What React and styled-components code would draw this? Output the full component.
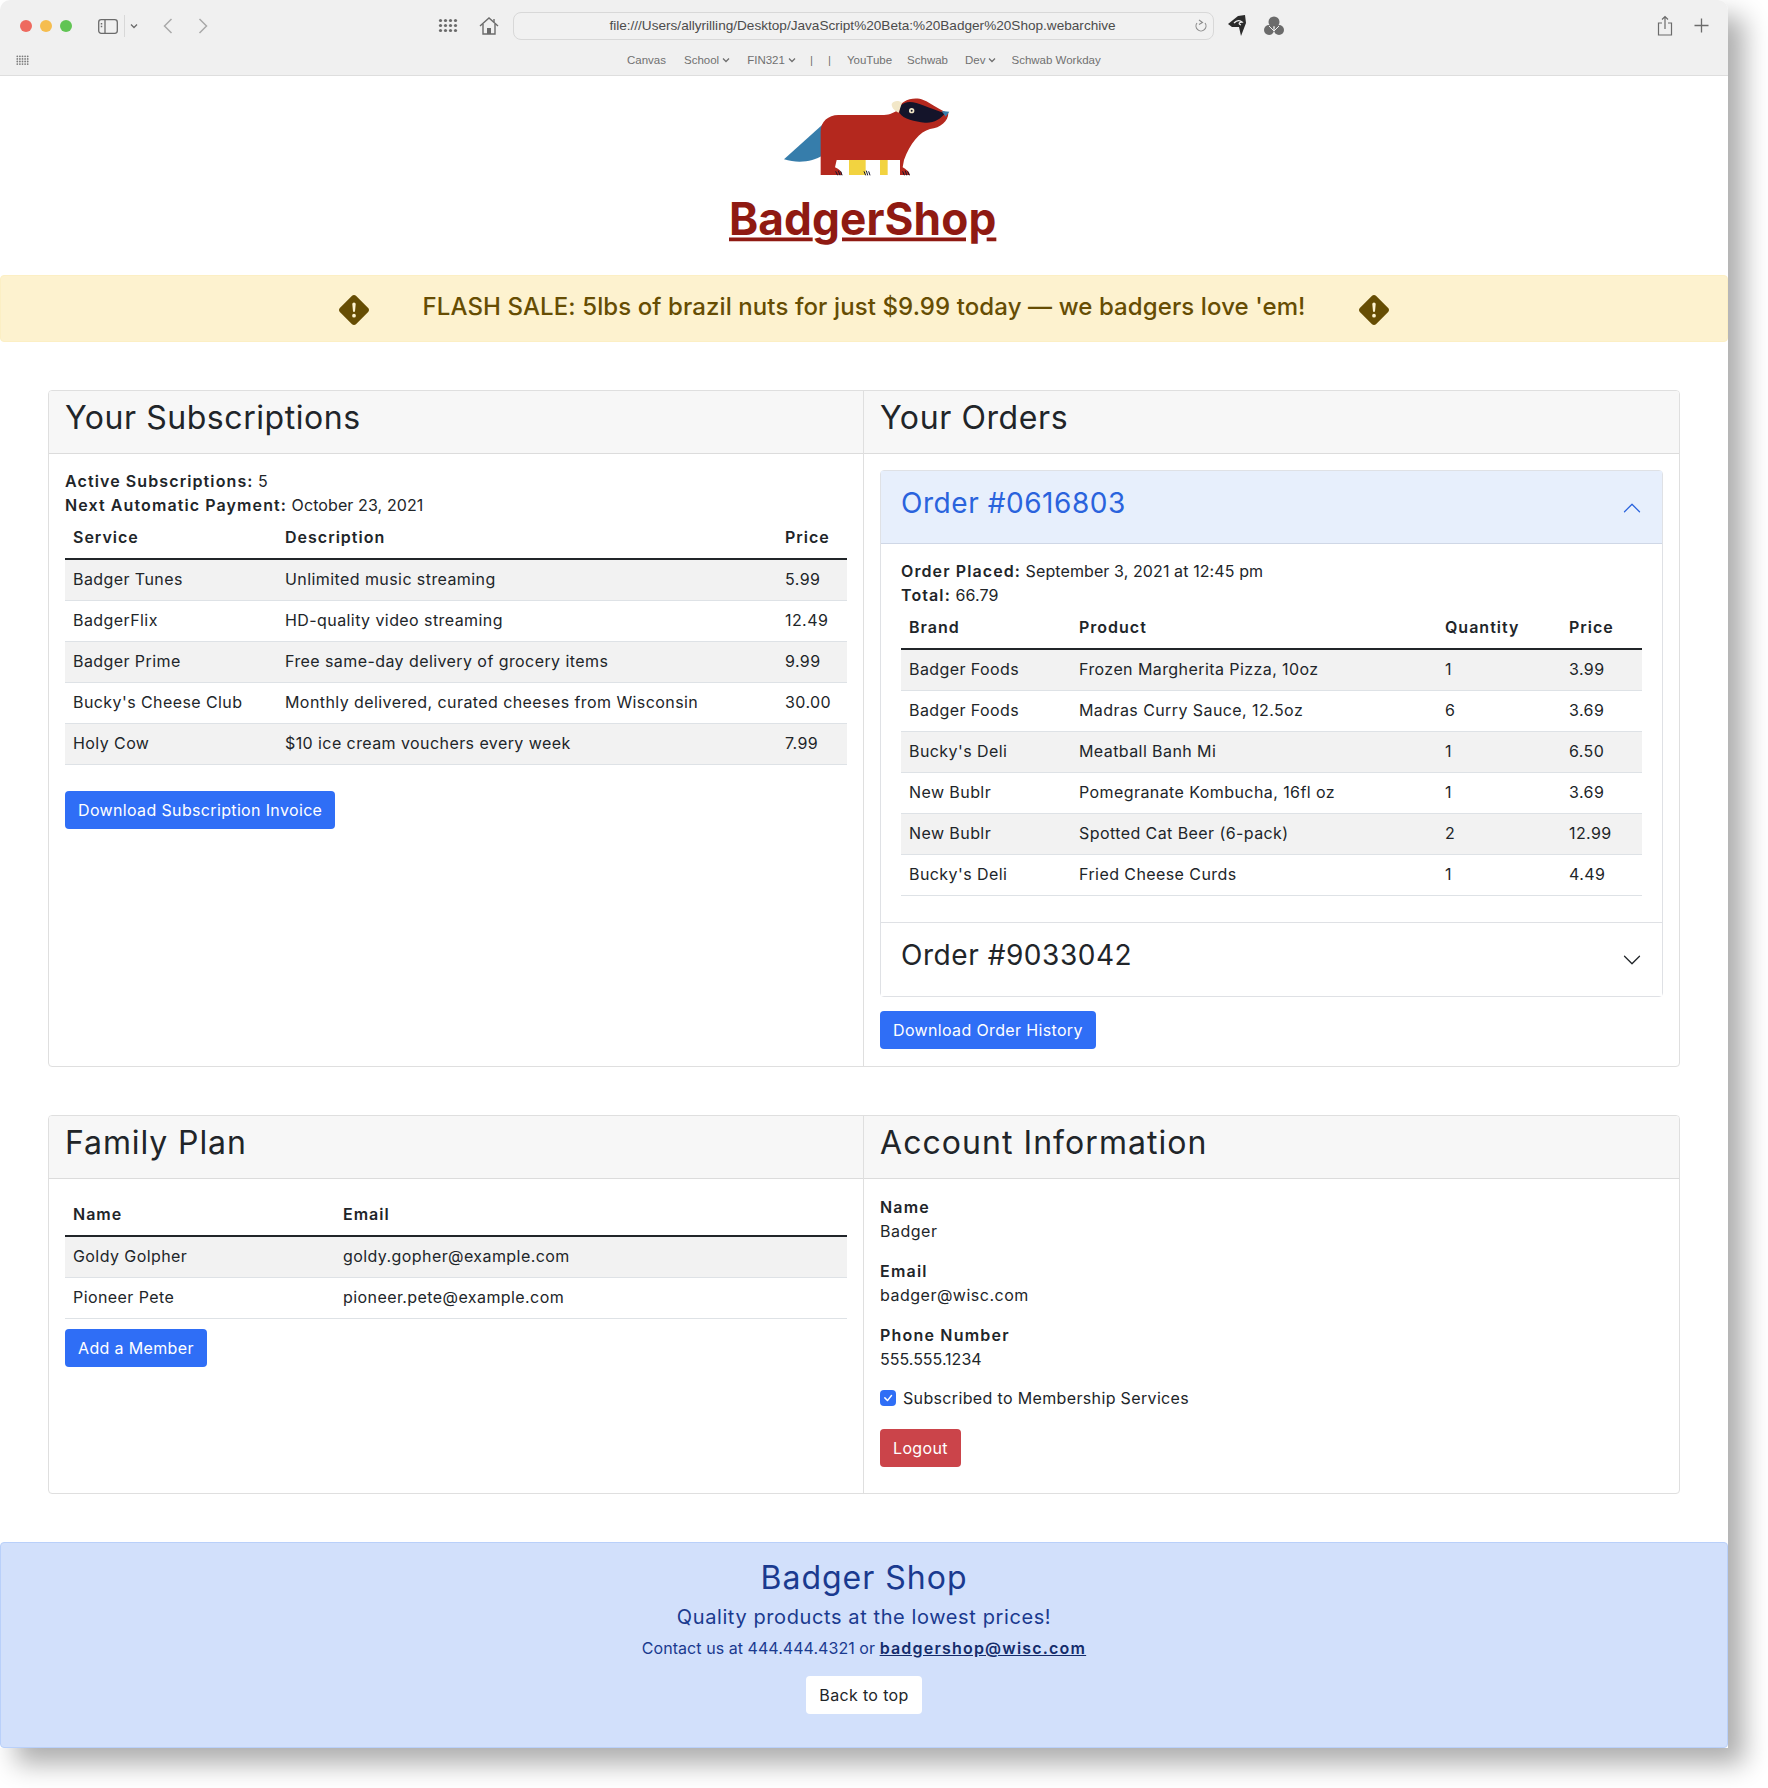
import React from "react";
import styled, { createGlobalStyle } from "styled-components";
import { BsExclamationDiamondFill, BsChevronDown, BsChevronUp, BsCheck } from "react-icons/bs";

const Global = createGlobalStyle`
  html, body { margin: 0; padding: 0; background: #fff; }
  body { font-family: Inter, "Liberation Sans", sans-serif; font-size: 16px; line-height: 24px; color: #212529; letter-spacing: .35px; }
  * { box-sizing: border-box; }
`;

const Page = styled.div`
  width: 1768px; height: 1788px; overflow: hidden; background: #fff;
`;
const Win = styled.div`
  width: 1728px; height: 1748px; background: #fff; border-radius: 10px 10px 0 0;
  box-shadow: 16px 16px 26px rgba(0,0,0,.32);
  display: flex; flex-direction: column;
`;
const Chrome = styled.div`
  height: 76px; flex: none; background: #f0f0f0; border-bottom: 1px solid #dedede; border-radius: 10px 10px 0 0;
  display: flex; flex-direction: column; color: #6e6e6e; letter-spacing: 0;
`;
const TopRow = styled.div`
  height: 51px; flex: none; display: flex; align-items: center; padding-left: 20px; position: relative;
`;
const Dot = styled.span`
  width: 12px; height: 12px; border-radius: 50%; background: ${p => p.$c}; margin-right: 8px; flex: none;
`;
const Tool = styled.span`
  display: inline-flex; flex: none; margin-left: ${p => p.$ml || 0}px; color: ${p => p.$c || "#6b6b6b"};
`;
const UrlBar = styled.div`
  width: 701px; height: 28px; margin-left: 14px; flex: none; border: 1px solid #d8d8d8; border-radius: 8px;
  display: flex; align-items: center; justify-content: center; position: relative;
  font-family: "Liberation Sans", sans-serif; font-size: 13.6px; color: #4c4c4c; padding-right: 2px; background: #f1f1f1;
`;
const Reload = styled.span`
  position: absolute; right: 5px; top: 5px; display: inline-flex; color: #8a8a8a;
`;
const BookRow = styled.div`
  height: 18px; flex: none; display: flex; align-items: center; padding-left: 16px; position: relative;
  font-family: "Liberation Sans", sans-serif; font-size: 11.5px; color: #707070;
`;
const Book = styled.span`
  margin-left: ${p => p.$ml}px; display: inline-flex; align-items: center; gap: 3px; flex: none; line-height: 14px;
`;

const Brand = styled.div`
  height: 199px; flex: none; display: flex; justify-content: center; padding: 4px 8px 0 0;
`;
const Banner = styled.div`
  height: 67px; flex: none; background: #fdf2cf; border: 1px solid #fcefc4; border-radius: 4px; color: #664d03;
  display: flex; align-items: center; justify-content: center;
`;
const BannerText = styled.h4`
  margin: 0 53px; font-size: 24px; line-height: 29px; font-weight: 500; position: relative; top: -2px; white-space: nowrap; letter-spacing: .1px;
`;
const BannerIcon = styled.span`
  display: inline-flex; color: #664d03; font-size: 30px; position: relative; top: 1px;
`;

const Main = styled.main`
  padding: 48px 48px 0; display: flex; flex-direction: column; gap: 48px;
`;
const Group = styled.section`
  display: grid; grid-template-columns: 814px 1fr; border: 1px solid #dfdfdf; border-radius: 4px; height: ${p => p.$h}px; overflow: hidden; flex: none;
`;
const Card = styled.div`
  display: flex; flex-direction: column; min-width: 0;
  & + & { border-left: 1px solid #dfdfdf; }
`;
const CardHead = styled.div`
  height: 63px; flex: none; background: #f7f7f7; border-bottom: 1px solid #dcdcdc; padding: 8px 16px;
`;
const H2 = styled.h2`
  margin: 0; font-size: 32px; line-height: 38px; font-weight: 400; letter-spacing: ${p => p.$ls}px; color: #212529;
`;
const CardBody = styled.div`
  padding: 16px; display: flex; flex-direction: column; align-items: flex-start;
`;
const Line = styled.div`
  height: 24px; line-height: 22px; white-space: nowrap; letter-spacing: .1px;
  b { font-weight: 600; letter-spacing: 1.1px; }
`;
const Table = styled.table`
  width: 100%; table-layout: fixed; border-collapse: collapse; font-size: 16px;
  margin-bottom: ${p => p.$mb}px;
  th { text-align: left; font-weight: 600; padding: 7px 8px 9px; height: 41px; border-bottom: 2px solid #212529; letter-spacing: 1px; line-height: 24px; white-space: nowrap; }
  td { padding: 7px 8px 9px; height: 41px; border-bottom: 1px solid #dee2e6; line-height: 24px; white-space: nowrap; letter-spacing: .42px; }
  tbody tr:nth-child(odd) td { background: #f2f2f2; }
`;
const Button = styled.button`
  height: 38px; padding: 0 13px; border: 0; border-radius: 4px; font: inherit; font-size: 16px; line-height: 24px; letter-spacing: inherit;
  color: ${p => p.$fg || "#fff"}; background: ${p => p.$bg || "#2f6ef6"}; white-space: nowrap; flex: none;
  margin-top: ${p => p.$mt || 0}px;
`;
const Accordion = styled.div`
  width: 100%; border: 1px solid #dfe1e5; border-radius: 4px;
`;
const AccHead = styled.div`
  height: ${p => p.$h}px; padding: 16px 20px; display: flex; justify-content: space-between;
  background: ${p => p.$open ? "#e7effc" : "#fff"}; color: ${p => p.$open ? "#2a63dd" : "#212529"};
  border-bottom: ${p => p.$open ? "1px solid #cfd7e6" : "0"};
  border-top: ${p => p.$first ? "0" : "1px solid #dfe1e5"};
`;
const H3 = styled.h3`
  margin: 0; font-size: 28px; height: 34px; line-height: 32px; font-weight: 400; letter-spacing: .55px;
`;
const Chevron = styled.span`
  display: inline-flex; font-size: 20px; margin-top: 11px;
`;
const AccBody = styled.div`
  padding: 16px 20px 16px;
`;
const Field = styled.div`
  margin-bottom: 16px;
`;
const Label = styled.div`
  font-weight: 600; letter-spacing: 1.2px; line-height: 24px;
`;
const Value = styled.div`
  line-height: 24px; letter-spacing: ${p => p.$ls ?? 0.5}px;
`;
const CheckRow = styled.label`
  display: flex; align-items: center; gap: 7px; margin: -1px 0 19px; height: 24px; white-space: nowrap;
`;
const Box = styled.span`
  width: 16px; height: 16px; border-radius: 4px; background: #2f6ef6; color: #fff; display: inline-flex; align-items: center; justify-content: center; font-size: 16px;
`;
const Footer = styled.footer`
  height: 206px; flex: none; margin-top: 48px; background: #d2e0fb; border: 1px solid #b9d0fa; border-radius: 4px; color: #1a3a8f;
  display: flex; flex-direction: column; align-items: center; padding-top: 16px;
`;
const FootTitle = styled.h2`
  margin: 0 0 8px; font-size: 32px; line-height: 38px; font-weight: 400; letter-spacing: 1px;
`;
const FootSub = styled.h5`
  margin: 0 0 7px; font-size: 20px; line-height: 24px; font-weight: 400; letter-spacing: .6px;
`;
const FootLine = styled.div`
  line-height: 24px; margin-bottom: 16px; letter-spacing: .05px;
  a { color: #142c6b; font-weight: 600; letter-spacing: 1.2px; text-decoration: underline; }
`;

const Logo = () => (
  <svg width="320" height="180" viewBox="0 0 960 540">
    <path d="M372 130 L252 238 C 295 252 340 245 368 226 Z" fill="#367dab" />
    <rect x="447" y="235" width="50" height="50" fill="#f2d340" />
    <rect x="540" y="235" width="23" height="50" fill="#f2d340" />
    <path d="M362 285 L362 155 C362 125 385 105 415 105 L545 105 C565 105 578 100 590 92 C600 62 640 48 670 60 C695 70 715 88 745 100 C745 122 722 145 690 147 C660 155 630 190 612 240 L608 262 C618 268 628 275 630 285 L600 285 L600 240 L410 240 L405 262 C418 268 425 275 427 285 Z" fill="#b4281e" />
    <path d="M600 78 C630 50 665 78 735 100 C722 118 700 130 675 128 C645 124 610 118 598 98 Z" fill="#14142a" />
    <path d="M575 72 C582 60 598 62 606 68 L596 98 C588 95 574 85 575 72 Z" fill="#f2e7c8" />
    <circle cx="635" cy="92" r="8" fill="#f2e7c8" />
    <circle cx="635" cy="92" r="3" fill="#14142a" />
    <path d="M725 93 L748 95 L737 110 Z" fill="#367dab" />
    <path d="M407 274 l6 12 M415 272 l5 14 M422 274 l4 12 M492 274 l5 12 M499 272 l4 14 M506 274 l4 12 M608 274 l5 12 M616 272 l4 14 M623 274 l5 12" stroke="#14142a" strokeWidth="3" fill="none" />
    <text x="87" y="464" textLength="802" lengthAdjust="spacingAndGlyphs" fontFamily="Inter, Lato, sans-serif" fontWeight="700" fontSize="136" fill="#8f1a12">BadgerShop</text>
    <path d="M87 478 H338 M426 478 H798 M860 478 H889" stroke="#8f1a12" strokeWidth="11" fill="none" />
  </svg>
);

const Svg = ({ w, h, children, ...r }) => (
  <svg width={w} height={h} viewBox={`0 0 ${w} ${h}`} fill="none" stroke="currentColor" {...r}>{children}</svg>
);
const DotGrid = ({ cols, rows, step, r, c }) => (
  <svg width={cols * step} height={rows * step} fill={c}>
    {Array.from({ length: cols * rows }).map((_, i) => (
      <circle key={i} cx={(i % cols) * step + step / 2} cy={Math.floor(i / cols) * step + step / 2} r={r} />
    ))}
  </svg>
);
const Caret = () => (
  <svg width="8" height="6" fill="none" stroke="currentColor" strokeWidth="1.3"><path d="M1 1.5 L4 4.5 L7 1.5" /></svg>
);

const subs = [
  ["Badger Tunes", "Unlimited music streaming", "5.99"],
  ["BadgerFlix", "HD-quality video streaming", "12.49"],
  ["Badger Prime", "Free same-day delivery of grocery items", "9.99"],
  ["Bucky's Cheese Club", "Monthly delivered, curated cheeses from Wisconsin", "30.00"],
  ["Holy Cow", "$10 ice cream vouchers every week", "7.99"],
];
const orders = [
  ["Badger Foods", "Frozen Margherita Pizza, 10oz", "1", "3.99"],
  ["Badger Foods", "Madras Curry Sauce, 12.5oz", "6", "3.69"],
  ["Bucky's Deli", "Meatball Banh Mi", "1", "6.50"],
  ["New Bublr", "Pomegranate Kombucha, 16fl oz", "1", "3.69"],
  ["New Bublr", "Spotted Cat Beer (6-pack)", "2", "12.99"],
  ["Bucky's Deli", "Fried Cheese Curds", "1", "4.49"],
];
const family = [
  ["Goldy Golpher", "goldy.gopher@example.com"],
  ["Pioneer Pete", "pioneer.pete@example.com"],
];

const DataTable = ({ widths, head, rows, mb }) => (
  <Table $mb={mb}>
    <colgroup>{widths.map((w, i) => <col key={i} width={w} />)}</colgroup>
    <thead><tr>{head.map(h => <th key={h}>{h}</th>)}</tr></thead>
    <tbody>{rows.map((r, i) => <tr key={i}>{r.map((c, j) => <td key={j}>{c}</td>)}</tr>)}</tbody>
  </Table>
);

export default function App() {
  return (
    <Page>
      <Global />
      <Win>
        <Chrome>
          <TopRow>
            <Dot $c="#ee6a5f" /><Dot $c="#f5bd4f" /><Dot $c="#61c454" />
            <Tool $ml={18}>
              <Svg w={20} h={18}><rect x=".7" y="2.7" width="18.6" height="13.6" rx="2.5" strokeWidth="1.3" /><path d="M7 3 V16" strokeWidth="1.3" /><path d="M3.5 6 V11" strokeWidth="1.5" strokeDasharray="1.5 1.2" /></Svg>
            </Tool>
            <Tool $ml={6}><Svg w={1} h={22}><path d="M.5 0 V22" stroke="#d8d8d8" /></Svg></Tool>
            <Tool $ml={5}><Caret /></Tool>
            <Tool $ml={25} $c="#a9a9a9"><Svg w={10} h={16} strokeWidth="1.5"><path d="M8.5 1 L1.5 8 L8.5 15" /></Svg></Tool>
            <Tool $ml={25} $c="#a9a9a9"><Svg w={10} h={16} strokeWidth="1.5"><path d="M1.5 1 L8.5 8 L1.5 15" /></Svg></Tool>
            <Tool $ml={230}><DotGrid cols={4} rows={3} step={5} r={1.6} c="#6b6b6b" /></Tool>
            <Tool $ml={21}>
              <Svg w={20} h={20} strokeWidth="1.4"><path d="M1 10 L10 2 L19 10" /><path d="M4 8 V18 H16 V8" /><rect x="8" y="12" width="4" height="6" fill="currentColor" stroke="none" /><path d="M15 3 V6" /></Svg>
            </Tool>
            <UrlBar>
              file:///Users/allyrilling/Desktop/JavaScript%20Beta:%20Badger%20Shop.webarchive
              <Reload><Svg w={14} h={16} strokeWidth="1.1"><path d="M3 5 A5 5 0 1 0 11 5" /><path d="M5 2 L8.5 4.5 L5 6.5" /></Svg></Reload>
            </UrlBar>
            <Tool $ml={13} $c="#2b2b2b">
              <svg width="20" height="22" viewBox="0 0 20 22" fill="currentColor"><path d="M1 9 L11 1 L18 0 L19 8 L14 21 L12 12 L5 12 Z" /><path d="M7 8 C10 5 13 5 15 7 C12 7 11 9 14 10" stroke="#f0f0f0" strokeWidth="1.3" fill="none" /></svg>
            </Tool>
            <Tool $ml={17}>
              <svg width="20" height="20" viewBox="0 0 20 20" fill="#6b6b6b"><circle cx="10" cy="6" r="5.5" /><circle cx="5" cy="14" r="5" /><circle cx="15" cy="14" r="5" /><path d="M10 10 V14 M5 10 L10 15 L15 10" stroke="#f0f0f0" strokeWidth="1" fill="none" /></svg>
            </Tool>
            <Tool $ml={373}>
              <Svg w={16} h={22} strokeWidth="1.2"><path d="M5 8 H1.5 V20 H14.5 V8 H11" /><path d="M8 14 V2 M5 4.5 L8 1.5 L11 4.5" /></Svg>
            </Tool>
            <Tool $ml={21}><Svg w={15} h={15} strokeWidth="1.3"><path d="M7.5 0.5 V14.5 M0.5 7.5 H14.5" /></Svg></Tool>
          </TopRow>
          <BookRow>
            <DotGrid cols={5} rows={4} step={2.6} r={0.9} c="#7b7b7b" />
            <Book $ml={598}>Canvas</Book>
            <Book $ml={18}>School <Caret /></Book>
            <Book $ml={17}>FIN321 <Caret /></Book>
            <Book $ml={14}>|</Book>
            <Book $ml={15}>|</Book>
            <Book $ml={16}>YouTube</Book>
            <Book $ml={15}>Schwab</Book>
            <Book $ml={17}>Dev <Caret /></Book>
            <Book $ml={15}>Schwab Workday</Book>
          </BookRow>
        </Chrome>
        <Brand><Logo /></Brand>
        <Banner>
          <BannerIcon><BsExclamationDiamondFill /></BannerIcon>
          <BannerText>FLASH SALE: 5lbs of brazil nuts for just $9.99 today — we badgers love 'em!</BannerText>
          <BannerIcon><BsExclamationDiamondFill /></BannerIcon>
        </Banner>
        <Main>
          <Group $h={677}>
            <Card>
              <CardHead><H2 $ls={0.55}>Your Subscriptions</H2></CardHead>
              <CardBody>
                <Line><b>Active Subscriptions:</b> 5</Line>
                <Line><b>Next Automatic Payment:</b> October 23, 2021</Line>
                <DataTable widths={[212, 500, 70]} head={["Service", "Description", "Price"]} rows={subs} mb={26} />
                <Button>Download Subscription Invoice</Button>
              </CardBody>
            </Card>
            <Card>
              <CardHead><H2 $ls={0.6}>Your Orders</H2></CardHead>
              <CardBody>
                <Accordion>
                  <AccHead $open $first $h={73}><H3>Order #0616803</H3><Chevron><BsChevronUp /></Chevron></AccHead>
                  <AccBody>
                    <Line><b>Order Placed:</b> September 3, 2021 at 12:45 pm</Line>
                    <Line><b>Total:</b> 66.79</Line>
                    <DataTable widths={[170, 366, 124, 81]} head={["Brand", "Product", "Quantity", "Price"]} rows={orders} mb={10} />
                  </AccBody>
                  <AccHead $h={74}><H3>Order #9033042</H3><Chevron><BsChevronDown /></Chevron></AccHead>
                </Accordion>
                <Button $mt={14}>Download Order History</Button>
              </CardBody>
            </Card>
          </Group>
          <Group $h={379}>
            <Card>
              <CardHead><H2 $ls={0.9}>Family Plan</H2></CardHead>
              <CardBody>
                <DataTable widths={[270, 512]} head={["Name", "Email"]} rows={family} mb={10} />
                <Button>Add a Member</Button>
              </CardBody>
            </Card>
            <Card>
              <CardHead><H2 $ls={1.05}>Account Information</H2></CardHead>
              <CardBody>
                <Field><Label>Name</Label><Value>Badger</Value></Field>
                <Field><Label>Email</Label><Value>badger@wisc.com</Value></Field>
                <Field><Label>Phone Number</Label><Value $ls={0}>555.555.1234</Value></Field>
                <CheckRow><Box><BsCheck /></Box>Subscribed to Membership Services</CheckRow>
                <Button $bg="#cb444a">Logout</Button>
              </CardBody>
            </Card>
          </Group>
        </Main>
        <Footer>
          <FootTitle>Badger Shop</FootTitle>
          <FootSub>Quality products at the lowest prices!</FootSub>
          <FootLine>Contact us at 444.444.4321 or <a href="#top">badgershop@wisc.com</a></FootLine>
          <Button $bg="#fff" $fg="#212529">Back to top</Button>
        </Footer>
      </Win>
    </Page>
  );
}
